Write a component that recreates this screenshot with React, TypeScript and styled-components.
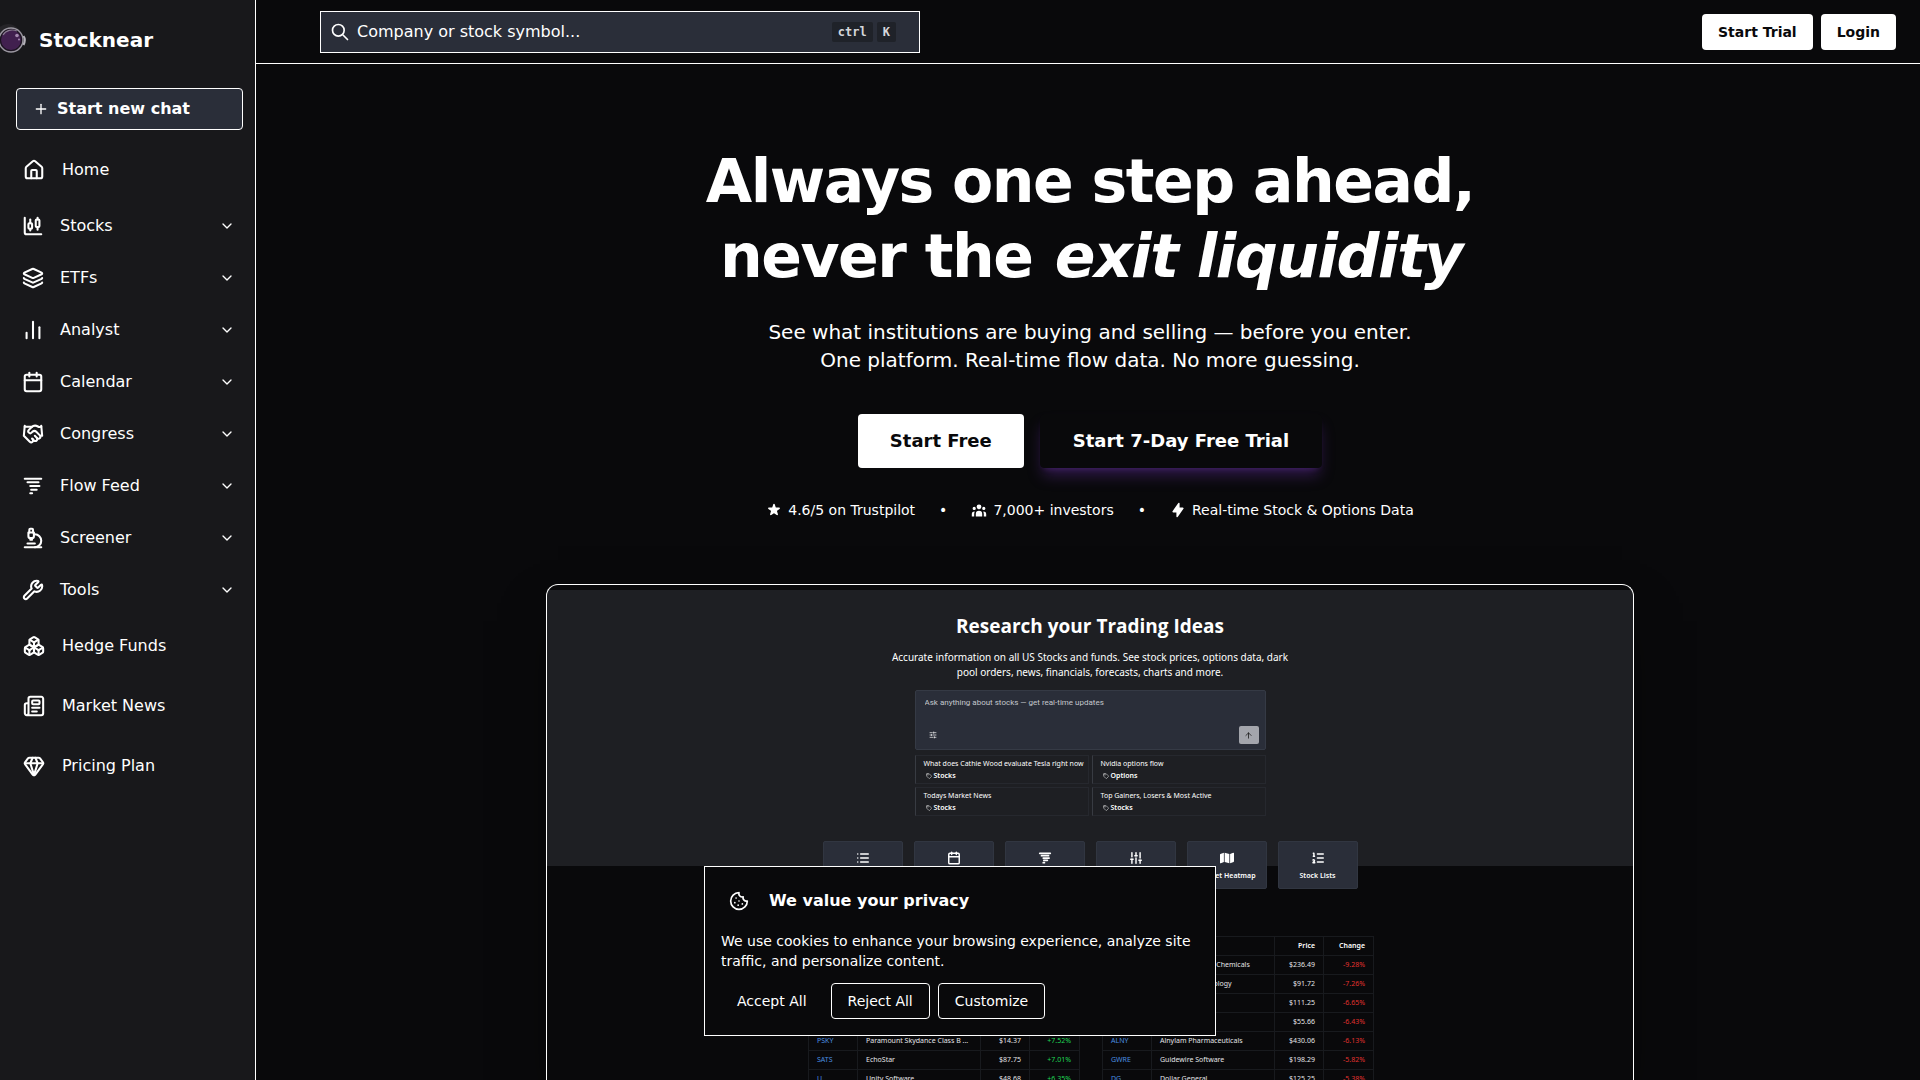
import React from "react";
import styled, { createGlobalStyle } from "styled-components";
import {
  ArrowUp, Boxes, Calendar, ChartCandlestick, ChartNoAxesColumn, ChevronDown, Cookie, Gem,
  Handshake, House, Layers, List, ListOrdered, Microscope, Newspaper, Plus,
  SlidersHorizontal, SlidersVertical, Tornado, Wrench, Tag,
} from "lucide-react";
import { FaMap } from "react-icons/fa6";
import { HiLightningBolt, HiStar, HiUserGroup } from "react-icons/hi";

const color = {
  page: "#09090b",
  side: "#18181b",
  field: "#2a2e39",
  line: "#ffffff",
  text: "#ffffff",
  panel: "#1e1f23",
  rule: "#181a1e",
  link: "#4a8fe0",
  up: "#1fd655",
  down: "#e0322f",
};

const Global = createGlobalStyle`
  *, *::before, *::after { box-sizing: border-box; }
  html { scrollbar-width: none; }
  body {
    margin: 0;
    background: ${color.page};
    color: ${color.text};
    font-family: "DejaVu Sans", sans-serif;
    font-size: 16px;
    line-height: 24px;
  }
  button, input, textarea { font: inherit; color: inherit; }
  button { cursor: pointer; }
  a { color: inherit; text-decoration: none; }
  h1, h2, p, ul { margin: 0; padding: 0; }
  ul { list-style: none; }
`;

const Shell = styled.div`
  display: grid;
  grid-template-columns: 256px minmax(0, 1fr);
  align-items: start;
`;

/* Sidebar */

const Sidebar = styled.aside`
  position: sticky;
  top: 0;
  height: 100vh;
  background: ${color.side};
  border-right: 1px solid ${color.line};
`;

const Brand = styled.a`
  display: flex;
  align-items: center;
  gap: 12px;
  height: 80px;
  font-size: 20px;
  font-weight: 700;
`;

const NewChat = styled.a`
  display: flex;
  align-items: center;
  gap: 8px;
  height: 42px;
  margin: 8px 12px 10px 16px;
  padding: 0 16px;
  border: 1px solid ${color.line};
  border-radius: 4px;
  background: ${color.field};
  font-weight: 600;
`;

const NavLink = styled.a`
  display: flex;
  align-items: center;
  gap: 17px;
  height: 60px;
  padding: 0 20px 0 23px;
`;

const NavGroup = styled.button`
  display: flex;
  align-items: center;
  gap: 16px;
  width: 100%;
  height: 52px;
  padding: 0 20px 0 22px;
  border: 0;
  background: none;
  text-align: left;
`;

const NavLabel = styled.span`
  flex: 1;
`;

/* Header */

const Header = styled.header`
  display: flex;
  align-items: center;
  justify-content: space-between;
  height: 64px;
  padding: 0 24px 0 64px;
  border-bottom: 1px solid ${color.line};
`;

const SearchBox = styled.label`
  display: flex;
  align-items: center;
  gap: 7px;
  width: 600px;
  height: 42px;
  padding: 0 23px 0 9px;
  border: 1px solid ${color.line};
  background: ${color.field};
`;

const SearchInput = styled.input`
  flex: 1;
  min-width: 0;
  padding: 0;
  border: 0;
  outline: 0;
  background: none;
  &::placeholder { color: #fff; opacity: 1; }
`;

const Keys = styled.span`
  display: flex;
  gap: 4px;
`;

const Key = styled.kbd`
  padding: 0 6px;
  border-radius: 2px;
  background: #1f2229;
  color: #d4d6db;
  font-family: "DejaVu Sans Mono", monospace;
  font-size: 12px;
  font-weight: 600;
  line-height: 20px;
`;

const HeaderActions = styled.div`
  display: flex;
  gap: 8px;
`;

const HeaderButton = styled.a`
  padding: 8px 16px;
  border-radius: 4px;
  background: #fff;
  color: #09090b;
  font-size: 14px;
  font-weight: 600;
  line-height: 20px;
`;

/* Hero */

const Hero = styled.main`
  display: flex;
  flex-direction: column;
  align-items: center;
  padding: 80px 0 0 4px;
`;

const Headline = styled.h1`
  font-size: 60px;
  font-weight: 700;
  line-height: 75px;
  letter-spacing: -0.025em;
  text-align: center;

  em { margin: 0 -2px 0 3px; }
`;

const Lead = styled.p`
  margin-top: 24px;
  font-size: 20px;
  line-height: 28px;
  text-align: center;
`;

const Actions = styled.div`
  display: flex;
  gap: 16px;
  margin-top: 40px;
`;

const Action = styled.a<{ $solid?: boolean }>`
  padding: ${(p) => (p.$solid ? "12px 32px" : "11px 32px")};
  border: ${(p) => (p.$solid ? "0" : `1px solid ${color.page}`)};
  border-radius: 4px;
  background: ${(p) => (p.$solid ? "#fff" : color.page)};
  color: ${(p) => (p.$solid ? "#09090b" : "#fff")};
  box-shadow: ${(p) =>
    p.$solid ? "none" : "0 10px 15px -3px rgba(126, 58, 200, 0.35), 0 4px 6px -4px rgba(126, 58, 200, 0.35)"};
  font-size: 18px;
  font-weight: 600;
  line-height: 30px;
`;

const Facts = styled.ul`
  display: flex;
  align-items: center;
  gap: 24px;
  margin-top: 32px;
  font-size: 14px;
  line-height: 20px;
`;

const Fact = styled.li`
  display: flex;
  align-items: center;
  gap: 6px;
`;

/* Product preview */

const Preview = styled.section`
  display: flex;
  flex-direction: column;
  align-items: center;
  width: 1088px;
  max-width: 92%;
  margin-top: 64px;
  padding-top: 27px;
  border: 1px solid ${color.line};
  border-bottom: 0;
  border-radius: 12px 12px 0 0;
  background: linear-gradient(${color.page} 5px, ${color.panel} 5px 281px, ${color.page} 281px);
  box-shadow: 0 25px 50px -12px rgba(0, 0, 0, 0.5);
  font-family: "Noto Sans", sans-serif;
  font-size: 7px;
  line-height: 12px;
`;

const PreviewTitle = styled.h2`
  font-family: "Open Sans", "Noto Sans", sans-serif;
  font-size: 19px;
  font-weight: 700;
  line-height: 28px;
`;

const PreviewText = styled.p`
  margin-top: 10px;
  font-size: 10px;
  line-height: 15px;
  text-align: center;
`;

const Ask = styled.div`
  display: flex;
  flex-direction: column;
  justify-content: space-between;
  width: 351px;
  height: 60px;
  margin-top: 10px;
  padding: 5px 6px 5px 9px;
  border: 1px solid #353a45;
  border-radius: 2px;
  background: ${color.field};
  font-family: Roboto, sans-serif;
  font-size: 8px;
`;

const AskInput = styled.input`
  padding: 0;
  border: 0;
  outline: 0;
  background: none;
  line-height: 14px;
  &::placeholder { color: #c3c6cc; opacity: 1; }
`;

const AskTools = styled.div`
  display: flex;
  align-items: center;
  justify-content: space-between;
  padding-left: 4px;
`;

const Send = styled.button`
  display: grid;
  place-items: center;
  width: 20px;
  height: 18px;
  padding: 0;
  border: 0;
  border-radius: 2px;
  background: #a3a5ac;
  color: #111;
`;

const Prompts = styled.div`
  display: grid;
  grid-template-columns: repeat(2, minmax(0, 1fr));
  gap: 3px;
  width: 351px;
  margin-top: 5px;
`;

const Prompt = styled.a`
  height: 29px;
  padding: 2px 8px;
  border: 1px solid #26282e;
  border-left-color: #383b42;
  white-space: nowrap;
`;

const Topic = styled.span`
  display: flex;
  align-items: center;
  gap: 2px;
  padding-left: 2px;
  font-weight: 600;
  line-height: 11px;
`;

const Tiles = styled.div`
  display: flex;
  gap: 11px;
  margin-top: 25px;
`;

const Tile = styled.a`
  display: flex;
  flex-direction: column;
  align-items: center;
  gap: 5px;
  width: 80px;
  height: 48px;
  padding-top: 9px;
  border: 1px solid #313641;
  border-radius: 2px;
  background: ${color.field};
  font-weight: 600;
`;

const Movers = styled.div`
  display: flex;
  gap: 22px;
  margin-top: 47px;
  padding-left: 2px;
`;

const MoversTable = styled.table`
  width: 271px;
  border-collapse: collapse;
  table-layout: fixed;
`;

const Cell = styled.td<{ $tone?: string; $end?: boolean }>`
  height: 19px;
  padding: 0 8px;
  border: 1px solid ${color.rule};
  color: ${(p) => p.$tone || "#e4e4e7"};
  text-align: ${(p) => (p.$end ? "right" : "left")};
  white-space: nowrap;
`;

const HeadCell = styled(Cell)`
  color: #fff;
  font-weight: 600;
`;

/* Cookie notice */

const Notice = styled.div`
  position: fixed;
  bottom: 44px;
  left: 50%;
  width: 512px;
  padding: 16px;
  transform: translateX(-50%);
  border: 1px solid ${color.line};
  background: ${color.page};
  font-size: 14px;
  line-height: 20px;
`;

const NoticeHead = styled.div`
  display: flex;
  align-items: center;
  gap: 12px;
`;

const NoticeIcon = styled.span`
  display: grid;
  padding: 8px;
`;

const NoticeTitle = styled.h2`
  font-size: 16px;
  font-weight: 600;
  line-height: 24px;
`;

const NoticeText = styled.p`
  margin: 12px 0;
`;

const NoticeActions = styled.div`
  display: flex;
  gap: 8px;
`;

const NoticeButton = styled.button<{ $outlined?: boolean }>`
  height: 36px;
  padding: 0 16px;
  border: ${(p) => (p.$outlined ? `1px solid ${color.line}` : "0")};
  border-radius: 4px;
  background: none;
`;

const Logo = () => (
  <svg width="27" height="32" viewBox="0 0 27 32" aria-hidden="true">
    <circle cx="8" cy="13" r="13" fill="#252428" />
    <circle cx="11" cy="16" r="12" fill="#2b2230" stroke="#9a96a0" strokeWidth="1.4" />
    <path d="M23.5 12c1.500 2 1.500 6 0 9" fill="none" stroke="#b5b2ba" strokeWidth="2" />
    <circle cx="11" cy="16" r="10.500" fill="#41204f" stroke="#17121b" />
    <path d="M3 11c3-5 9-6 14-4" fill="none" stroke="#8a7a92" strokeWidth="1.2" />
    <circle cx="17" cy="11.500" r="1.800" fill="#a58bb0" />
    <circle cx="19" cy="15.500" r="1" fill="#a58bb0" />
  </svg>
);

const SearchIcon = () => (
  <svg width="20" height="20" viewBox="0 0 24 24" fill="none" stroke="currentColor" strokeWidth="2" aria-hidden="true">
    <path strokeLinecap="round" strokeLinejoin="round" d="M21 21l-6-6m2-5a7 7 0 11-14 0 7 7 0 0114 0z" />
  </svg>
);

const groups = [
  { label: "Stocks", Icon: ChartCandlestick },
  { label: "ETFs", Icon: Layers },
  { label: "Analyst", Icon: ChartNoAxesColumn },
  { label: "Calendar", Icon: Calendar },
  { label: "Congress", Icon: Handshake },
  { label: "Flow Feed", Icon: Tornado },
  { label: "Screener", Icon: Microscope },
  { label: "Tools", Icon: Wrench },
];

const links = [
  { label: "Hedge Funds", Icon: Boxes },
  { label: "Market News", Icon: Newspaper },
  { label: "Pricing Plan", Icon: Gem },
];

const prompts = [
  ["What does Cathie Wood evaluate Tesla right now", "Stocks"],
  ["Nvidia options flow", "Options"],
  ["Todays Market News", "Stocks"],
  ["Top Gainers, Losers & Most Active", "Stocks"],
];

const tiles = [
  { name: "Watchlist", icon: <List size={14} strokeWidth={2.5} /> },
  { name: "Calendar", icon: <Calendar size={14} strokeWidth={2.5} /> },
  { name: "Flow Feed", icon: <Tornado size={14} strokeWidth={3} /> },
  { name: "Screener", icon: <SlidersVertical size={14} strokeWidth={2.5} /> },
  { name: "Market Heatmap", label: "Market Heatmap", icon: <FaMap size={14} /> },
  { name: "Stock Lists", label: "Stock Lists", icon: <ListOrdered size={14} strokeWidth={2.5} /> },
];

type Row = [string, string, string, string];

const gainers: Row[] = [
  ["", "", "", ""],
  ["", "", "", ""],
  ["", "", "", ""],
  ["", "", "", ""],
  ["PSKY", "Paramount Skydance Class B ...", "$14.37", "+7.52%"],
  ["SATS", "EchoStar", "$87.75", "+7.01%"],
  ["U", "Unity Software", "$48.68", "+6.35%"],
];

const losers: Row[] = [
  ["", "Air Products and Chemicals", "$236.49", "-9.28%"],
  ["", "Microchip Technology", "$91.72", "-7.26%"],
  ["", "", "$111.25", "-6.65%"],
  ["", "", "$55.66", "-6.43%"],
  ["ALNY", "Alnylam Pharmaceuticals", "$430.06", "-6.13%"],
  ["GWRE", "Guidewire Software", "$198.29", "-5.82%"],
  ["DG", "Dollar General", "$125.25", "-5.38%"],
];

const MoversList = ({ rows, tone, titled }: { rows: Row[]; tone: string; titled?: boolean }) => (
  <MoversTable>
    <colgroup>
      <col width="49" />
      <col width="123" />
      <col width="49" />
      <col width="50" />
    </colgroup>
    <thead>
      <tr>
        <HeadCell as="th" aria-label="Symbol" />
        <HeadCell as="th" aria-label="Name" />
        <HeadCell as="th" aria-label="Price" $end>{titled && "Price"}</HeadCell>
        <HeadCell as="th" aria-label="Change" $end>{titled && "Change"}</HeadCell>
      </tr>
    </thead>
    <tbody>
      {rows.map(([symbol, name, price, change], i) => (
        <tr key={i}>
          <Cell $tone={color.link}>{symbol}</Cell>
          <Cell>{name}</Cell>
          <Cell $end>{price}</Cell>
          <Cell $end $tone={tone}>{change}</Cell>
        </tr>
      ))}
    </tbody>
  </MoversTable>
);

export default function App() {
  return (
    <>
      <Global />
      <Shell>
        <Sidebar>
          <Brand href="#"><Logo />Stocknear</Brand>
          <NewChat href="#"><Plus size={16} />Start new chat</NewChat>
          <nav>
            <NavLink href="#"><House size={22} strokeWidth={2.25} /><NavLabel>Home</NavLabel></NavLink>
            {groups.map(({ label, Icon }) => (
              <NavGroup key={label} type="button">
                <Icon size={22} strokeWidth={2.25} />
                <NavLabel>{label}</NavLabel>
                <ChevronDown size={16} />
              </NavGroup>
            ))}
            {links.map(({ label, Icon }) => (
              <NavLink key={label} href="#"><Icon size={22} strokeWidth={2.25} /><NavLabel>{label}</NavLabel></NavLink>
            ))}
          </nav>
        </Sidebar>
        <div>
          <Header>
            <SearchBox>
              <SearchIcon />
              <SearchInput aria-label="Search" placeholder="Company or stock symbol..." />
              <Keys><Key>ctrl</Key><Key>K</Key></Keys>
            </SearchBox>
            <HeaderActions>
              <HeaderButton href="#">Start Trial</HeaderButton>
              <HeaderButton href="#">Login</HeaderButton>
            </HeaderActions>
          </Header>
          <Hero>
            <Headline>Always one step ahead,<br />never the <em>exit liquidity</em></Headline>
            <Lead>
              See what institutions are buying and selling — before you enter.<br />
              One platform. Real-time flow data. No more guessing.
            </Lead>
            <Actions>
              <Action href="#" $solid>Start Free</Action>
              <Action href="#">Start 7-Day Free Trial</Action>
            </Actions>
            <Facts>
              <Fact><HiStar size={16} />4.6/5 on Trustpilot</Fact>
              <li>•</li>
              <Fact><HiUserGroup size={16} />7,000+ investors</Fact>
              <li>•</li>
              <Fact><HiLightningBolt size={16} />Real-time Stock &amp; Options Data</Fact>
            </Facts>
            <Preview>
              <PreviewTitle>Research your Trading Ideas</PreviewTitle>
              <PreviewText>
                Accurate information on all US Stocks and funds. See stock prices, options data, dark<br />
                pool orders, news, financials, forecasts, charts and more.
              </PreviewText>
              <Ask>
                <AskInput aria-label="Ask" placeholder="Ask anything about stocks — get real-time updates" />
                <AskTools>
                  <SlidersHorizontal size={8} />
                  <Send type="button" aria-label="Send"><ArrowUp size={9} /></Send>
                </AskTools>
              </Ask>
              <Prompts>
                {prompts.map(([text, topic]) => (
                  <Prompt key={text} href="#">
                    {text}
                    <Topic><Tag size={6} />{topic}</Topic>
                  </Prompt>
                ))}
              </Prompts>
              <Tiles>
                {tiles.map(({ name, label, icon }) => (
                  <Tile key={name} href="#" aria-label={name}>{icon}{label}</Tile>
                ))}
              </Tiles>
              <Movers>
                <MoversList rows={gainers} tone={color.up} />
                <MoversList rows={losers} tone={color.down} titled />
              </Movers>
            </Preview>
          </Hero>
        </div>
      </Shell>
      <Notice role="dialog" aria-labelledby="notice-title">
        <NoticeHead>
          <NoticeIcon><Cookie size={20} /></NoticeIcon>
          <NoticeTitle id="notice-title">We value your privacy</NoticeTitle>
        </NoticeHead>
        <NoticeText>
          We use cookies to enhance your browsing experience, analyze site traffic, and personalize content.
        </NoticeText>
        <NoticeActions>
          <NoticeButton type="button">Accept All</NoticeButton>
          <NoticeButton type="button" $outlined>Reject All</NoticeButton>
          <NoticeButton type="button" $outlined>Customize</NoticeButton>
        </NoticeActions>
      </Notice>
    </>
  );
}
